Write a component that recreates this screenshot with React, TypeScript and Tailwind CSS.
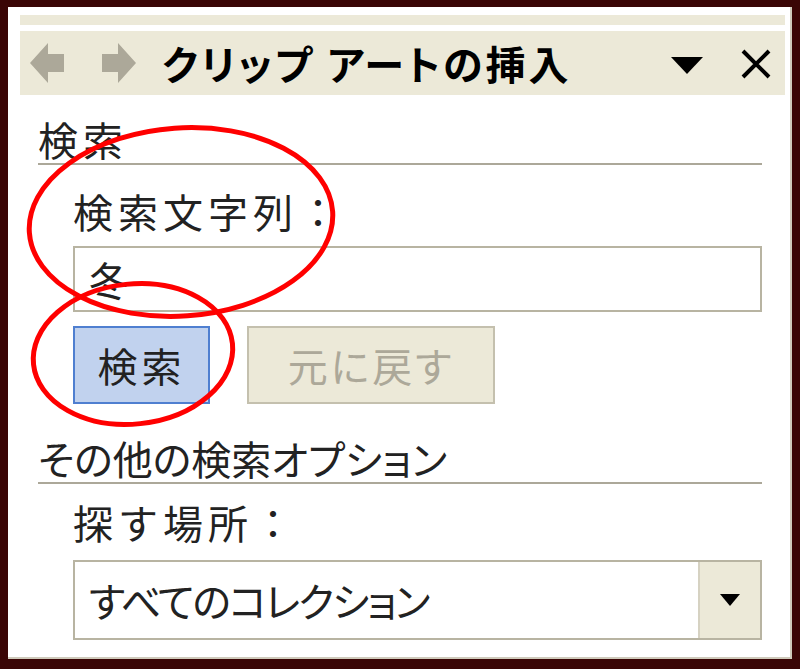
import { ReactNode } from "react";

const jp = "[font-family:'Noto_Sans_CJK_JP','Noto_Sans_CJK_SC',sans-serif] [font-feature-settings:'palt']";

function Arrow({ dir }: { dir: "left" | "right" }) {
  return (
    <svg width="36" height="44" viewBox="0 0 36 44" className={dir === "right" ? "-scale-x-100" : ""}>
      <path d="M0 22 L18 2 L18 13 L34 13 L34 31 L18 31 L18 42 Z" fill="#aca899" />
    </svg>
  );
}

function SectionHeading({ children, className = "" }: { children: ReactNode; className?: string }) {
  return (
    <div className={`border-b-2 border-[#aca899] text-[40px] leading-[48px] text-[#222] ${className}`}>
      {children}
    </div>
  );
}

export default function App() {
  return (
    <div className={`w-[800px] h-[669px] bg-[#3a0505] pt-[7px] pl-[8px] pr-[8px] pb-[10px] ${jp}`}>
      <div className="relative h-full bg-white border-r-2 border-b-2 border-[#cfcabb] pt-[8px]">
        <div className="ml-[12px] mr-[5px] h-[10px] bg-[#ece9d8]" />
        <div className="ml-[12px] mr-[5px] mt-[6px] h-[64px] bg-[#ece9d8] flex items-center pl-[10px] pr-[14px]">
          <Arrow dir="left" />
          <div className="ml-[34px]">
            <Arrow dir="right" />
          </div>
          <span className="ml-[26px] text-[40px] font-bold leading-none text-black tracking-[3px]">
            クリップ アートの挿入
          </span>
          <svg width="32" height="18" viewBox="0 0 32 18" className="ml-auto mt-[6px]">
            <path d="M0 0 H32 L16 17 Z" fill="#000" />
          </svg>
          <svg width="30" height="30" viewBox="0 0 30 30" className="ml-[38px] mt-[2px]">
            <path d="M2 2 L28 28 M28 2 L2 28" stroke="#000" strokeWidth="4" />
          </svg>
        </div>

        <div className="pl-[30px] pr-[28px]">
          <SectionHeading className="mt-[20px] tracking-[5px]">検索</SectionHeading>
          <div className="pl-[35px]">
            <div className="mt-[22px] text-[40px] leading-[48px] text-[#222] tracking-[5px] [font-feature-settings:normal]">
              検索文字列：
            </div>
            <div className="mt-[11px] h-[66px] border-2 border-[#b8b4a2] flex items-center pl-[14px] text-[40px] text-[#222]">
              冬
            </div>
            <div className="mt-[14px] flex gap-[37px]">
              <button className="w-[137px] h-[78px] bg-[#c1d2ee] border-2 border-[#4f7fd0] text-[40px] text-[#222] tracking-[4px]">
                検索
              </button>
              <button className="w-[248px] h-[78px] bg-[#ece9d8] border-2 border-[#c4c0ae] text-[40px] text-[#aca899] tracking-[3px]">
                元に戻す
              </button>
            </div>
          </div>
          <SectionHeading className="mt-[30px]">その他の検索オプション</SectionHeading>
          <div className="pl-[35px]">
            <div className="mt-[14px] text-[40px] leading-[48px] text-[#222] tracking-[5px] [font-feature-settings:normal]">
              探す場所：
            </div>
            <div className="mt-[14px] h-[80px] border-2 border-[#b8b4a2] flex">
              <div className="flex-1 flex items-center pl-[14px] text-[40px] text-[#222] tracking-[-2px]">
                すべてのコレクション
              </div>
              <div className="w-[62px] bg-[#ece9d8] border-l-2 border-[#d6d2c2] flex items-center justify-center">
                <svg width="20" height="12" viewBox="0 0 20 12">
                  <path d="M0 0 H20 L10 12 Z" fill="#000" />
                </svg>
              </div>
            </div>
          </div>
        </div>

        <svg className="absolute left-[-8px] top-[-7px] pointer-events-none" width="800" height="669" viewBox="0 0 800 669">
          <ellipse cx="181" cy="222" rx="152" ry="94" fill="none" stroke="#ff0000" strokeWidth="5" transform="rotate(-4 181 222)" />
          <ellipse cx="133" cy="354" rx="100" ry="70" fill="none" stroke="#ff0000" strokeWidth="5" transform="rotate(-6 133 354)" />
        </svg>
      </div>
    </div>
  );
}
